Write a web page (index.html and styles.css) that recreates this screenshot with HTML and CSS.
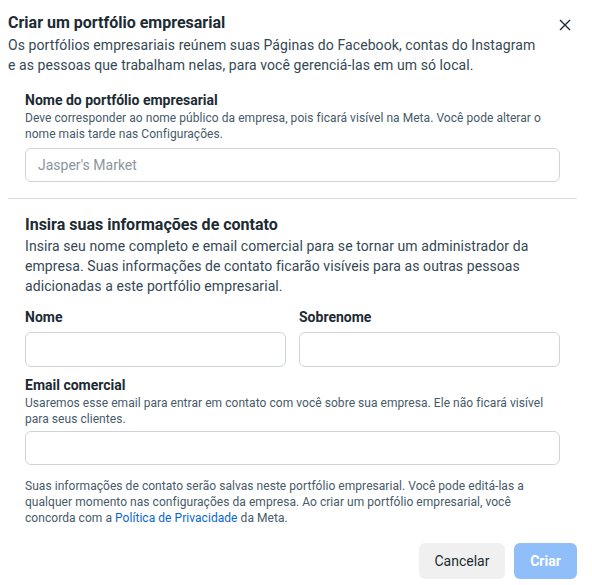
FILE: index.html
```html
<!DOCTYPE html>
<html lang="pt-BR">
<head>
<meta charset="utf-8">
<link rel="stylesheet" href="styles.css">
</head>
<body>
<div class="dialog">
  <div class="header">
    <div class="header-text">
      <h1 class="title">Criar um portfólio empresarial</h1>
      <p class="lead">Os portfólios empresariais reúnem suas Páginas do Facebook, contas do Instagram e as pessoas que trabalham nelas, para você gerenciá-las em um só local.</p>
    </div>
    <button class="close" aria-label="Fechar">
      <svg width="12" height="12" viewBox="0 0 12 12"><path d="M1 1L11 11M11 1L1 11" stroke="#1c2b33" stroke-width="1.4" fill="none"/></svg>
    </button>
  </div>

  <div class="section first">
    <label class="label">Nome do portfólio empresarial</label>
    <p class="help">Deve corresponder ao nome público da empresa, pois ficará visível na Meta. Você pode alterar o nome mais tarde nas Configurações.</p>
    <input class="field field-name" type="text" placeholder="Jasper's Market">
  </div>

  <hr class="divider">

  <div class="section">
    <h2 class="subtitle">Insira suas informações de contato</h2>
    <p class="lead">Insira seu nome completo e email comercial para se tornar um administrador da empresa. Suas informações de contato ficarão visíveis para as outras pessoas adicionadas a este portfólio empresarial.</p>
    <div class="row">
      <div class="col">
        <label class="label">Nome</label>
        <input class="field field-row" type="text">
      </div>
      <div class="col">
        <label class="label">Sobrenome</label>
        <input class="field field-row" type="text">
      </div>
    </div>
    <label class="label label-email">Email comercial</label>
    <p class="help">Usaremos esse email para entrar em contato com você sobre sua empresa. Ele não ficará visível para seus clientes.</p>
    <input class="field field-email" type="text">
    <p class="help footnote">Suas informações de contato serão salvas neste portfólio empresarial. Você pode editá-las a qualquer momento nas configurações da empresa. Ao criar um portfólio empresarial, você concorda com a <a href="#" class="link">Política de Privacidade</a> da Meta.</p>
  </div>

  <div class="actions">
    <button class="btn btn-cancel">Cancelar</button>
    <button class="btn btn-primary" disabled>Criar</button>
  </div>
</div>
</body>
</html>
```

FILE: styles.css
```css
* { box-sizing: border-box; }
html, body {
  margin: 0;
  padding: 0;
  background: #ffffff;
}
body {
  font-family: Roboto, "Liberation Sans", Arial, sans-serif;
  color: #1c2b33;
  width: 592px;
  height: 585px;
  overflow: hidden;
}
.dialog {
  padding: 12px 15px 0 8px;
}
.header {
  display: flex;
  align-items: flex-start;
}
.header-text {
  flex: 1;
  max-width: 534px;
}
.title {
  margin: 0;
  font-size: 16px;
  line-height: 22px;
  font-weight: 700;
  color: #1c2b33;
}
.lead {
  margin: 1px 0 0;
  font-size: 14px;
  line-height: 20px;
  color: #344854;
  font-weight: 400;
  letter-spacing: 0.08px;
}
.close {
  border: 0;
  background: transparent;
  padding: 0;
  width: 12px;
  height: 12px;
  margin: 7px 6px 0 auto;
  display: flex;
}
.section {
  padding: 0 17px;
}
.section.first {
  padding-top: 16px;
}
.label {
  display: block;
  font-size: 14px;
  line-height: 18px;
  font-weight: 700;
  color: #1c2b33;
}
.help {
  margin: 1px 0 0;
  font-size: 12px;
  line-height: 16px;
  color: #465a69;
  letter-spacing: 0.05px;
}
.field {
  display: block;
  width: 100%;
  height: 34px;
  border: 1px solid #cfd4d8;
  border-radius: 6px;
  padding: 0 12px;
  font-family: inherit;
  font-size: 14px;
  color: #1c2b33;
  background: #fff;
  outline: none;
}
.field::placeholder { color: #8a969e; }
.field-name { margin-top: 6px; }
.divider {
  border: 0;
  border-top: 1px solid #dadde1;
  margin: 16px 0 16px;
}
.subtitle {
  margin: 0;
  font-size: 16px;
  line-height: 20px;
  font-weight: 700;
  color: #1c2b33;
}
.row {
  display: flex;
  gap: 13px;
  margin-top: 12px;
}
.col { flex: 1; }
.field-row {
  margin-top: 6px;
  height: 35px;
}
.label-email { margin-top: 9px; }
.field-email { margin-top: 4px; }
.footnote {
  margin-top: 13px;
  max-width: 505px;
}
.link {
  color: #0a66d8;
  text-decoration: none;
}
.actions {
  display: flex;
  justify-content: flex-end;
  gap: 9px;
  margin-top: 17px;
}
.btn {
  height: 36px;
  border: 0;
  border-radius: 6px;
  font-family: inherit;
  font-size: 14px;
  padding: 0;
}
.btn-cancel {
  width: 86px;
  background: #f0f0f0;
  color: #1c2b33;
}
.btn-primary {
  width: 63px;
  background: #90bef9;
  color: #ffffff;
  font-weight: 700;
}
```
